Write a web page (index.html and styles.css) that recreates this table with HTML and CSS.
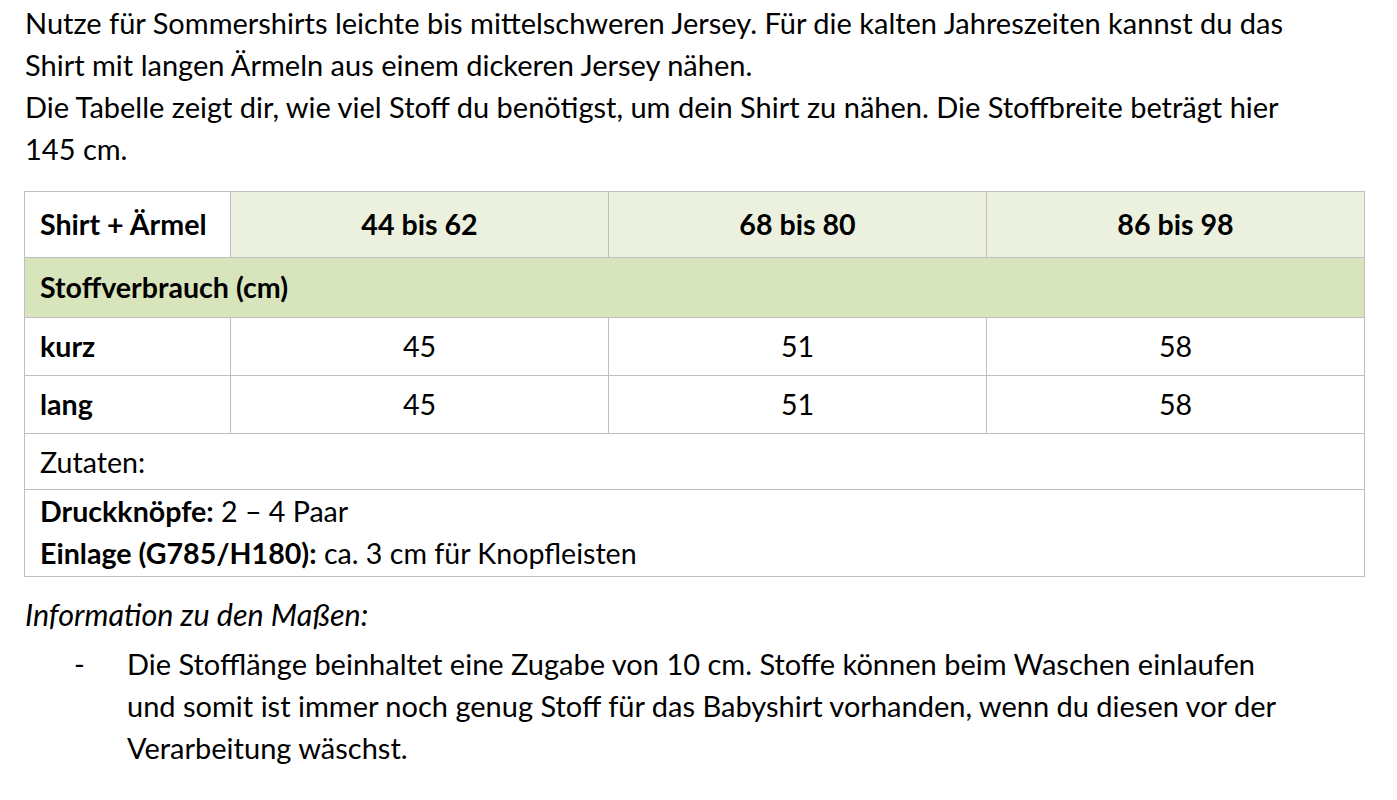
FILE: index.html
```html
<!DOCTYPE html>
<html lang="de">
<head>
<meta charset="utf-8">
<link rel="stylesheet" href="styles.css">
</head>
<body>
<div class="page">
  <p class="intro">Nutze für Sommershirts leichte bis mittelschweren Jersey. Für die kalten Jahreszeiten kannst du das<br>Shirt mit langen Ärmeln aus einem dickeren Jersey nähen.<br>Die Tabelle zeigt dir, wie viel Stoff du benötigst, um dein Shirt zu nähen. Die Stoffbreite beträgt hier<br>145 cm.</p>
  <table class="fabric">
    <colgroup>
      <col class="c-label"><col class="c-size"><col class="c-size"><col class="c-size">
    </colgroup>
    <tr class="head">
      <th class="label">Shirt + Ärmel</th>
      <th class="tint">44 bis 62</th>
      <th class="tint">68 bis 80</th>
      <th class="tint">86 bis 98</th>
    </tr>
    <tr class="section">
      <th colspan="4" class="label">Stoffverbrauch (cm)</th>
    </tr>
    <tr class="data">
      <th class="label">kurz</th><td>45</td><td>51</td><td>58</td>
    </tr>
    <tr class="data">
      <th class="label">lang</th><td>45</td><td>51</td><td>58</td>
    </tr>
    <tr class="zutaten">
      <td colspan="4" class="plain">Zutaten:</td>
    </tr>
    <tr class="items">
      <td colspan="4" class="plain"><b>Druckknöpfe:</b> 2 – 4 Paar<br><b>Einlage (G785/H180):</b> ca. 3 cm für Knopfleisten</td>
    </tr>
  </table>
  <p class="info">Information zu den Maßen:</p>
  <ul class="notes">
    <li><span class="dash">-</span><span class="note-text">Die Stofflänge beinhaltet eine Zugabe von 10 cm. Stoffe können beim Waschen einlaufen<br>und somit ist immer noch genug Stoff für das Babyshirt vorhanden, wenn du diesen vor der<br>Verarbeitung wäschst.</span></li>
  </ul>
</div>
</body>
</html>
```
FILE: styles.css
```css
html, body {
  margin: 0;
  padding: 0;
  background: #fff;
}
body {
  font-family: "Lato", "Open Sans", sans-serif;
  font-size: 29px;
  color: #000;
}
.page {
  padding: 2px 0 0 25px;
  width: 1340px;
}
.intro {
  margin: 0;
  line-height: 42px;
  white-space: nowrap;
}
.fabric {
  margin-top: 21px;
  border-collapse: collapse;
  width: 1341px;
  margin-left: -1px;
  table-layout: fixed;
  font-size: 28.6px;
}
.c-label { width: 206px; }
.c-size { width: 378px; }
.fabric th, .fabric td {
  border: 1px solid #bfbfbf;
  padding: 0 15px 2px;
  text-align: center;
  font-weight: normal;
}
.fabric th { font-weight: bold; }
.fabric .label { text-align: left; }
.head th { height: 63px; }
.head .tint { background: #ebf1de; }
.section th { background: #d7e4bc; height: 57px; }
.data th, .data td { height: 55px; }
.zutaten td { height: 55px; padding-bottom: 0; }
.plain { text-align: left !important; }
.items td { height: 83px; line-height: 42px; }
.info {
  margin: 16px 0 0;
  font-style: italic;
  font-size: 30.5px;
  line-height: 42px;
}
.notes {
  list-style: none;
  margin: 8px 0 0;
  padding: 0;
}
.notes li {
  display: flex;
  line-height: 42px;
}
.dash {
  width: 102px;
  padding-left: 49px;
  box-sizing: border-box;
  flex: none;
}
.note-text { white-space: nowrap; }
```
